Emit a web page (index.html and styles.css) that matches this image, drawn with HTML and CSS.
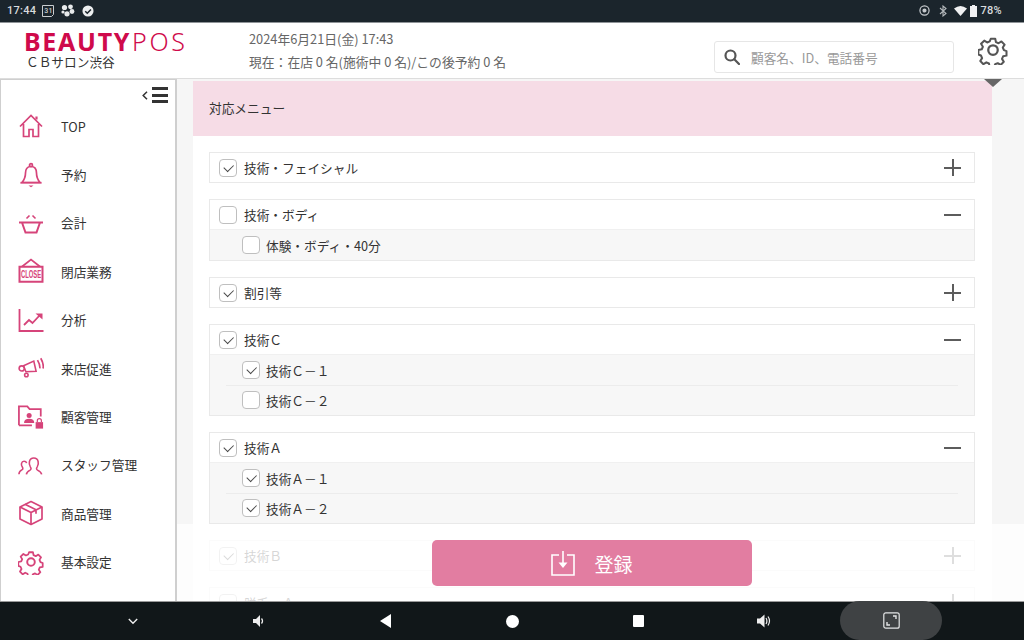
FILE: index.html
```html
<!DOCTYPE html>
<html lang="ja">

<head>
    <meta charset="utf-8">
    <meta name="viewport" content="width=device-width, initial-scale=1.0">
    <title>BEAUTY POS</title>
    <link rel="stylesheet" href="styles.css">
</head>

<body>
    <div class="statusbar">
        <div class="status-left">
            <span>17:44</span>
            <svg width="12" height="13" viewBox="0 0 12 13" fill="none" stroke="#c9cdd0"><path d="M.5 1.500h11v9l-2 2h-9z"/><text x="2.200" y="9" font-size="7" fill="#c9cdd0" stroke="none" font-family="Roboto">31</text></svg>
            <svg width="14" height="13" viewBox="0 0 14 13" fill="#e8eaeb"><circle cx="3.500" cy="3.500" r="2.600"/><circle cx="9.500" cy="2.800" r="2.400"/><circle cx="11" cy="7.500" r="2.400"/><circle cx="6" cy="9.800" r="2.600"/><circle cx="2" cy="8" r="1.600"/></svg>
            <svg width="12" height="12" viewBox="0 0 13 13"><circle cx="6.500" cy="6.500" r="6" fill="#eceeef"/><path d="M3.500 6.800l2.200 2.200 4-4.200" fill="none" stroke="#1b242b" stroke-width="1.600"/></svg>
        </div>
        <div class="status-right">
            <svg width="11" height="11" viewBox="0 0 12 12" fill="none" stroke="#c9cdd0" stroke-width="1.300"><circle cx="6" cy="6" r="5"/><circle cx="6" cy="6" r="1.600" fill="#c9cdd0"/></svg>
            <svg class="st-bt" width="8" height="12" viewBox="0 0 8 12" fill="none" stroke="#b4b9bc" stroke-width="1.100"><path d="M1 3l6 5.500-3 2.500v-10l3 2.500-6 5.500"/></svg>
            <svg class="st-wifi" width="13" height="10" viewBox="0 0 13 10" fill="#f0f1f2"><path d="M0 2.500q6.500-5 13 0l-6.500 7.500z"/></svg>
            <svg class="st-batt" width="7" height="12" viewBox="0 0 7 12" fill="#f0f1f2"><path d="M2 0h3v1h2v11h-7v-11h2z"/></svg>
            <span>78%</span>
        </div>
    </div>

    <header class="topbar">
        <div class="brand">
            <div class="logo"><b>BEAUTY</b><span>POS</span></div>
            <div class="shop">ＣＢサロン渋谷</div>
        </div>
        <div class="info">
            <p>2024年6月21日(金) 17:43</p>
            <p>現在：在店 0 名(施術中 0 名)/この後予約 0 名</p>
        </div>
        <div class="search">
            <svg width="16" height="16" viewBox="0 0 16 16" fill="none" stroke="#555" stroke-width="2.200"><circle cx="6.500" cy="6.500" r="5"/><path d="M10.300 10.300l4.700 4.700" stroke-linecap="round"/></svg>
            <span>顧客名、ID、電話番号</span>
        </div>
        <svg class="gear" width="30" height="30" viewBox="0 0 24 24" fill="none" stroke="#555" stroke-width="1.800" stroke-linejoin="round"><circle cx="12" cy="12" r="3.800"/><path d="M10 2h4l.6 3 2.300 1 2.600-1.600 2.800 2.800-1.600 2.600 1 2.300 2.300.9v4l-3 .6-1 2.300 1.600 2.600-2.800 2.800-2.600-1.600-2.300 1-.9 2.300h-4l-.6-3-2.300-1-2.600 1.600-2.800-2.800 1.600-2.600-1-2.300-2.300-.9v-4l3-.6 1-2.300-1.600-2.600 2.800-2.800 2.600 1.600 2.300-1z" transform="translate(1.200 1.200) scale(.9)"/></svg>
    </header>

    <div class="workspace">
        <nav class="sidebar">
            <div class="collapse">
                <svg width="6" height="9" viewBox="0 0 6 9" fill="none" stroke="#333" stroke-width="1.500"><path d="M5 .8l-3.800 3.700 3.800 3.700"/></svg>
                <div class="burger"><i></i><i></i><i></i></div>
            </div>
            <a class="nav-item">
                <svg width="26" height="26" viewBox="0 0 26 26" fill="none" stroke="#d6447a" stroke-width="1.700"><path d="M2 13.500L13 2.500l11 11M5.500 11v12.500h5.500v-7h4v7h5.500V11"/><path d="M18.500 3.500v3" stroke-width="2.200"/></svg>
                <span>TOP</span>
            </a>
            <a class="nav-item">
                <svg width="26" height="26" viewBox="0 0 26 26" fill="none" stroke="#d6447a" stroke-width="1.700"><circle cx="13" cy="3.200" r="1.500"/><path d="M13 4.500c-4 0-5.500 3-5.500 6.500 0 4-1 6.500-3.500 9.500h18c-2.500-3-3.500-5.500-3.500-9.500 0-3.500-1.500-6.500-5.500-6.500z"/><path d="M2.500 20.700h21"/><path d="M10.500 23.500h5l-2.500 1.800z" fill="#d6447a" stroke="none"/></svg>
                <span>予約</span>
            </a>
            <a class="nav-item">
                <svg width="26" height="26" viewBox="0 0 26 26" fill="none" stroke="#d6447a" stroke-width="1.700"><path d="M1 12.500h24M4 12.500l3.500 10h11l3.500-10" stroke-width="2"/><path d="M8.500 8.500l3-3M17.500 8.500l-3-3" stroke-width="1.600"/></svg>
                <span>会計</span>
            </a>
            <a class="nav-item">
                <svg width="26" height="26" viewBox="0 0 26 26"><path d="M3.500 9L13 1.500 22.500 9" fill="none" stroke="#d6447a" stroke-width="1.700"/><path d="M1.500 8.800h23v15h-23z" fill="#fff" stroke="#d6447a" stroke-width="2"/><text transform="translate(13 20.300) scale(.56 1)" font-size="10.500" font-weight="700" text-anchor="middle" fill="#d6447a" font-family="Liberation Sans">CLOSE</text></svg>
                <span>閉店業務</span>
            </a>
            <a class="nav-item">
                <svg width="26" height="26" viewBox="0 0 26 26" fill="none" stroke="#d6447a" stroke-width="1.800"><path d="M1.500 2v22h24"/><path d="M6 18l5-5 3.500 3 7-7.500"/><path d="M17.500 6.500h7v6z" fill="#d6447a" stroke="none"/></svg>
                <span>分析</span>
            </a>
            <a class="nav-item">
                <svg width="26" height="26" viewBox="0 0 28 26" fill="none" stroke="#d6447a" stroke-width="1.700"><path d="M6 10.500l11-5 2.500 11-11 .5z"/><circle cx="4" cy="13.500" r="2.800"/><circle cx="9" cy="20.500" r="1.900"/><path d="M21 4.500q3 5 2.500 9M24.500 2.500q3.500 6 2.500 11" stroke-width="1.800"/></svg>
                <span>来店促進</span>
            </a>
            <a class="nav-item">
                <svg width="26" height="26" viewBox="0 0 28 26"><path d="M1 22V1.500h9l2.500 3h12v8M1 22h14" fill="none" stroke="#d6447a" stroke-width="1.900"/><circle cx="12" cy="11.500" r="2.700" fill="#d6447a"/><path d="M6.500 19.500c0-3 2-4.500 5.500-4.500s5.500 1.500 5.500 4.500z" fill="#d6447a"/><path d="M19 18.500h8v7h-8z" fill="#d6447a"/><path d="M20.800 18.500v-1.500a2.200 2.200 0 0 1 4.400 0v1.500" fill="none" stroke="#d6447a" stroke-width="1.300"/></svg>
                <span>顧客管理</span>
            </a>
            <a class="nav-item">
                <svg width="26" height="26" viewBox="0 0 28 26" fill="none" stroke="#d6447a" stroke-width="1.700"><path d="M1 23c0-3 1.500-4 3.500-5 1-.5.800-2 0-3-1.500-2-1-6 2-6 1.500 0 2.500 1 2.800 2"/><path d="M9 23c.3-2.500 2-3.500 4-4.500 1.500-.8 1.200-2.300.3-3.500-2-2.800-1.800-9.500 3.700-9.500s5.700 6.700 3.700 9.500c-.9 1.200-1.200 2.700.3 3.500 2 1 4 2 4.500 4.500"/></svg>
                <span>スタッフ管理</span>
            </a>
            <a class="nav-item">
                <svg width="26" height="26" viewBox="0 0 26 26" fill="none" stroke="#d6447a" stroke-width="1.700" stroke-linejoin="round"><path d="M13 1.500l11 5.500v12l-11 5.500L2 19V7z"/><path d="M2 7l11 5.500L24 7M13 12.500v12M7 4.200l11 5.500v4"/></svg>
                <span>商品管理</span>
            </a>
            <a class="nav-item">
                <svg width="26" height="26" viewBox="0 0 24 24" fill="none" stroke="#d6447a" stroke-width="1.800" stroke-linejoin="round"><circle cx="12" cy="12" r="3.500"/><path d="M10 2h4l.6 3 2.300 1 2.600-1.600 2.800 2.800-1.600 2.600 1 2.300 2.300.9v4l-3 .6-1 2.300 1.600 2.600-2.800 2.800-2.600-1.600-2.300 1-.9 2.300h-4l-.6-3-2.300-1-2.600 1.600-2.800-2.800 1.600-2.600-1-2.300-2.300-.9v-4l3-.6 1-2.300-1.600-2.600 2.800-2.800 2.600 1.600 2.300-1z" transform="translate(1.200 1.200) scale(.9)"/></svg>
                <span>基本設定</span>
            </a>
        </nav>

        <main class="content">
            <div class="panel">
                <h2 class="panel-title">対応メニュー</h2>
                <div class="groups">
                    <section class="group">
                        <div class="row"><label class="check on"></label><span>技術・フェイシャル</span><i class="toggle plus"></i></div>
                    </section>
                    <section class="group">
                        <div class="row"><label class="check"></label><span>技術・ボディ</span><i class="toggle minus"></i></div>
                        <div class="sub"><label class="check"></label><span>体験・ボディ・40分</span></div>
                    </section>
                    <section class="group">
                        <div class="row"><label class="check on"></label><span>割引等</span><i class="toggle plus"></i></div>
                    </section>
                    <section class="group">
                        <div class="row"><label class="check on"></label><span>技術Ｃ</span><i class="toggle minus"></i></div>
                        <div class="sub"><label class="check on"></label><span>技術Ｃ－１</span></div>
                        <div class="sub"><label class="check"></label><span>技術Ｃ－２</span></div>
                    </section>
                    <section class="group">
                        <div class="row"><label class="check on"></label><span>技術Ａ</span><i class="toggle minus"></i></div>
                        <div class="sub"><label class="check on"></label><span>技術Ａ－１</span></div>
                        <div class="sub"><label class="check on"></label><span>技術Ａ－２</span></div>
                    </section>
                    <section class="group">
                        <div class="row"><label class="check on"></label><span>技術Ｂ</span><i class="toggle plus"></i></div>
                    </section>
                    <section class="group">
                        <div class="row"><label class="check"></label><span>脱毛・Ａ</span><i class="toggle plus"></i></div>
                    </section>
                </div>
            </div>
            <div class="notch"></div>
            <div class="save-veil">
                <button class="save">
                    <svg width="24" height="25" viewBox="0 0 24 25" fill="none" stroke="#fff" stroke-width="1.600"><path d="M8 4H1v20h22V4h-7"/><path d="M12 0v14"/><path d="M7.500 11.500h9L12 17z" fill="#fff" stroke="none"/></svg>
                    <span>登録</span>
                </button>
            </div>
        </main>
    </div>

    <div class="navbar">
        <svg class="nb" width="10" height="7" viewBox="0 0 10 7" fill="none" stroke="#eee" stroke-width="1.400"><path d="M.8 1l4.200 4.200L9.200 1"/></svg>
        <svg class="nb" width="11" height="12" viewBox="0 0 11 12" fill="#eee"><path d="M0 4h3l4-4v12l-4-4H0z"/><path d="M8.500 3.500q2 2.500 0 5" fill="none" stroke="#eee" stroke-width="1.300"/></svg>
        <svg class="nb" width="11" height="14" viewBox="0 0 11 14" fill="#fff"><path d="M11 0v14L0 7z"/></svg>
        <svg class="nb" width="13" height="13" viewBox="0 0 13 13" fill="#fff"><circle cx="6.500" cy="6.500" r="6.500"/></svg>
        <svg class="nb" width="11" height="12" viewBox="0 0 11 12" fill="#fff"><rect width="11" height="12" rx="1"/></svg>
        <svg class="nb" width="14" height="14" viewBox="0 0 14 14" fill="#eee"><path d="M0 4.500h3L7.500.500v13L3 9.500H0z"/><path d="M9 4q1.800 3 0 6M11 2.500q3 4.500 0 9" fill="none" stroke="#eee" stroke-width="1.200"/></svg>
        <div class="nb-pill">
            <svg width="17" height="17" viewBox="0 0 17 17" fill="none" stroke="#e4e5e6" stroke-width="1.200"><rect x=".8" y=".8" width="15.400" height="15.400" rx="2"/><path d="M10 4h3v3M4 10v3h3" stroke-width="1.400"/></svg>
        </div>
    </div>
</body>

</html>
```

FILE: styles.css
```css
* {
    box-sizing: border-box;
}

body {
    margin: 0;
    width: 1024px;
    height: 640px;
    overflow: hidden;
    display: flex;
    flex-direction: column;
    font-family: "Noto Sans CJK JP", "Noto Sans", sans-serif;
    color: #333;
    background: #f6f6f6;
}

p,
h2 {
    margin: 0;
    font-weight: 400;
}

/* android status bar */
.statusbar {
    height: 23px;
    flex: none;
    display: flex;
    justify-content: space-between;
    align-items: center;
    padding: 0 22px 1px 7px;
    background: #1b252c;
    border-bottom: 1px solid #8f9498;
    color: #d8dbdd;
    font-family: Roboto, sans-serif;
    font-size: 11px;
    font-weight: 500;
    letter-spacing: .3px;
}

.status-left,
.status-right {
    display: flex;
    align-items: center;
    gap: 6px;
}

.status-left svg + svg {
    margin-left: 1px;
}

.status-right {
    gap: 0;
}

.st-bt {
    margin-left: 9px;
}

.st-wifi {
    margin-left: 7px;
}

.st-batt {
    margin-left: 3px;
    margin-right: 3px;
}

/* top header */
.topbar {
    height: 56px;
    flex: none;
    display: flex;
    align-items: center;
    padding-left: 24px;
    background: #fff;
    border-bottom: 1px solid #ddd;
}

.brand {
    width: 225px;
    flex: none;
    margin-top: -2px;
}

.logo {
    height: 24px;
    color: #cf0a4b;
    font-family: "Noto Sans", sans-serif;
    font-size: 25px;
    line-height: 24px;
    font-weight: 300;
    letter-spacing: 1.700px;
}

.logo b {
    font-weight: 700;
}

.logo span {
    margin-left: 1px;
    letter-spacing: 2.600px;
}

.shop {
    padding-left: 2px;
    font-size: 12.700px;
    line-height: 18px;
}

.info {
    width: 465px;
    flex: none;
    margin-top: -1px;
    font-size: 12.800px;
    line-height: 23px;
    color: #666;
}

.search {
    width: 240px;
    height: 32px;
    flex: none;
    display: flex;
    align-items: center;
    gap: 11px;
    padding-left: 9px;
    margin-top: 13px;
    border: 1px solid #e6e6e6;
    border-radius: 3px;
    color: #999;
    font-size: 12.700px;
}

.gear {
    margin-left: 24px;
    margin-top: -2px;
}

/* sidebar + main */
.workspace {
    flex: 1;
    display: flex;
    min-height: 0;
}

.sidebar {
    width: 177px;
    flex: none;
    background: #fff;
    border: 1px solid #cfcfcf;
    border-width: 1px 2px 0 1px;
}

.collapse {
    height: 22px;
    display: flex;
    justify-content: flex-end;
    align-items: flex-start;
    gap: 4px;
    padding: 7px 7px 0 0;
}

.collapse svg {
    margin-top: 4px;
}

.burger {
    width: 16px;
    height: 16px;
    display: flex;
    flex-direction: column;
    justify-content: space-between;
}

.burger i {
    display: block;
    height: 3px;
    background: #333;
}

.nav-item {
    height: 48.400px;
    display: flex;
    align-items: center;
    padding-left: 17px;
    font-size: 12.700px;
    color: #333;
}

.nav-item svg {
    flex: none;
}

.nav-item span {
    margin-left: 17px;
}

.content {
    flex: 1;
    position: relative;
    overflow: hidden;
    padding: 2px 32px 0 16px;
}

.panel {
    background: #fff;
    height: 600px;
}

.panel-title {
    height: 55px;
    padding: 17px 16px 0;
    background: #f6dce6;
    font-size: 12.700px;
    line-height: 20px;
}

.groups {
    padding: 16px 17px 16px 16px;
}

.group {
    margin-bottom: 16px;
    border: 1px solid #e9e9e9;
    background: #fff;
}

.row {
    height: 29px;
    display: flex;
    align-items: center;
    padding-left: 9px;
    font-size: 12.700px;
}

.sub {
    height: 31px;
    display: flex;
    align-items: center;
    padding-left: 32px;
    font-size: 12.700px;
    background: #f7f7f7;
    border-top: 1px solid #f0f0f0;
}

/* the line between two sub rows stops short of the edges */
.sub + .sub {
    height: 30px;
    border-top: none;
    background: linear-gradient(#ececec, #ececec) 16px 0 / calc(100% - 32px) 1px no-repeat, #f7f7f7;
}

.check {
    position: relative;
    width: 18px;
    height: 18px;
    flex: none;
    margin-right: 7px;
    background: #fff;
    border: 1px solid #bfbfbf;
    border-radius: 4px;
}

.sub .check {
    margin-right: 6px;
}

.on::after {
    content: "";
    position: absolute;
    left: 4px;
    top: 4px;
    width: 8px;
    height: 4.500px;
    border-left: 1.600px solid #484848;
    border-bottom: 1.600px solid #484848;
    transform: rotate(-45deg);
}

.toggle {
    position: relative;
    width: 17px;
    height: 17px;
    margin-left: auto;
    margin-right: 13px;
}

.toggle::before,
.plus::after {
    content: "";
    position: absolute;
    background: #5c5c5c;
}

.toggle::before {
    left: 0;
    right: 0;
    top: 8px;
    height: 2px;
}

.plus::after {
    top: 0;
    bottom: 0;
    left: 8px;
    width: 2px;
}

/* triangle under the settings gear */
.notch {
    position: absolute;
    top: 0;
    right: 22px;
    width: 0;
    height: 0;
    border-style: solid;
    border-width: 8px 9px 0;
    border-color: #666 transparent transparent;
}

.save-veil {
    position: absolute;
    left: 0;
    right: 0;
    top: 445px;
    bottom: 0;
    display: flex;
    justify-content: center;
    padding: 16px 17px 0 0;
    background: rgba(255, 255, 255, .8);
}

.save {
    width: 320px;
    height: 46px;
    display: flex;
    justify-content: center;
    align-items: center;
    gap: 19px;
    padding: 0;
    border: none;
    border-radius: 5px;
    background: #e27da1;
    color: #fff;
    font: 400 19px "Noto Sans CJK JP", sans-serif;
}

/* android nav bar */
.navbar {
    position: relative;
    height: 39px;
    flex: none;
    display: flex;
    align-items: center;
    background: #111719;
    border-top: 1px solid #9a9a9a;
}

.nb {
    position: absolute;
    top: 13px;
}

.nb:nth-child(1) { left: 128px; top: 16px; }
.nb:nth-child(2) { left: 253px; }
.nb:nth-child(3) { left: 380px; top: 12px; }
.nb:nth-child(4) { left: 506px; }
.nb:nth-child(5) { left: 633px; }
.nb:nth-child(6) { left: 757px; top: 12px; }

.nb-pill {
    position: absolute;
    left: 840px;
    top: -1px;
    width: 102px;
    height: 39px;
    display: flex;
    justify-content: center;
    align-items: center;
    border-radius: 20px;
    background: #3f4244;
}
```
